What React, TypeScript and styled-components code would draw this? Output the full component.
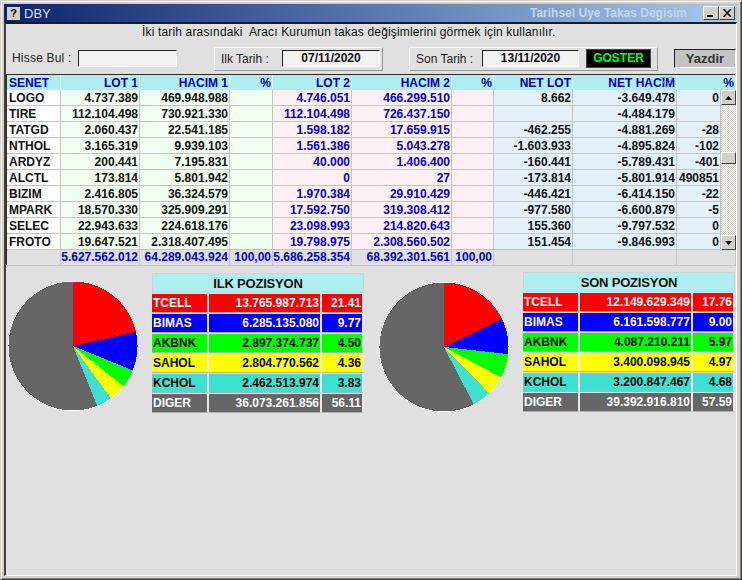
import React from "react";
import styled, { createGlobalStyle } from "styled-components";

const GlobalStyle = createGlobalStyle`
  html, body {
    margin: 0;
    padding: 0;
    background: #d4d0c8;
  }
  * {
    box-sizing: border-box;
  }
`;

const FONT = `"Liberation Sans", Arial, sans-serif`;

type Row = [string, string, string, string, string, string, string, string];

const rows: Row[] = [
  ["LOGO", "4.737.389", "469.948.988", "4.746.051", "466.299.510", "8.662", "-3.649.478", "0"],
  ["TIRE", "112.104.498", "730.921.330", "112.104.498", "726.437.150", "", "-4.484.179", ""],
  ["TATGD", "2.060.437", "22.541.185", "1.598.182", "17.659.915", "-462.255", "-4.881.269", "-28"],
  ["NTHOL", "3.165.319", "9.939.103", "1.561.386", "5.043.278", "-1.603.933", "-4.895.824", "-102"],
  ["ARDYZ", "200.441", "7.195.831", "40.000", "1.406.400", "-160.441", "-5.789.431", "-401"],
  ["ALCTL", "173.814", "5.801.942", "0", "27", "-173.814", "-5.801.914", "490851"],
  ["BIZIM", "2.416.805", "36.324.579", "1.970.384", "29.910.429", "-446.421", "-6.414.150", "-22"],
  ["MPARK", "18.570.330", "325.909.291", "17.592.750", "319.308.412", "-977.580", "-6.600.879", "-5"],
  ["SELEC", "22.943.633", "224.618.176", "23.098.993", "214.820.643", "155.360", "-9.797.532", "0"],
  ["FROTO", "19.647.521", "2.318.407.495", "19.798.975", "2.308.560.502", "151.454", "-9.846.993", "0"],
];

type Slice = { name: string; value: string; pct: number; bg: string; fg: string };

const makeSlices = (values: [string, number][]): Slice[] => {
  const names = ["TCELL", "BIMAS", "AKBNK", "SAHOL", "KCHOL", "DIGER"];
  const bgs = ["#ff0000", "#0000ff", "#00ff00", "#ffff00", "#40e0d0", "#666666"];
  const fgs = ["#ffffff", "#ffffff", "#000000", "#000000", "#000000", "#ffffff"];
  return values.map(([value, pct], i) => ({ name: names[i], value, pct, bg: bgs[i], fg: fgs[i] }));
};

const ilk = makeSlices([
  ["13.765.987.713", 21.41],
  ["6.285.135.080", 9.77],
  ["2.897.374.737", 4.5],
  ["2.804.770.562", 4.36],
  ["2.462.513.974", 3.83],
  ["36.073.261.856", 56.11],
]);

const son = makeSlices([
  ["12.149.629.349", 17.76],
  ["6.161.598.777", 9.0],
  ["4.087.210.211", 5.97],
  ["3.400.098.945", 4.97],
  ["3.200.847.467", 4.68],
  ["39.392.916.810", 57.59],
]);

const Pie = ({ slices }: { slices: Slice[] }) => {
  let angle = 0;
  const r = 64.5;
  const c = 65;
  const point = (a: number) => {
    const rad = (a / 100) * Math.PI * 2;
    return `${c + r * Math.sin(rad)} ${c - r * Math.cos(rad)}`;
  };
  return (
    <PieSvg width="130" height="130" viewBox="0 0 130 130">
      <circle cx={c} cy={c} r={r + 0.5} fill="#ffffff" />
      {slices.map((s) => {
        const start = angle;
        angle += s.pct;
        const large = s.pct > 50 ? 1 : 0;
        return (
          <path
            key={s.name}
            d={`M${c} ${c} L${point(start)} A${r} ${r} 0 ${large} 1 ${point(angle)} Z`}
            fill={s.bg}
            shapeRendering="crispEdges"
          />
        );
      })}
    </PieSvg>
  );
};

const Position = ({ title, slices, top, pieTop }: { title: string; slices: Slice[]; top: number; pieTop: number }) => (
  <PositionBlock $top={top}>
    <PieWrap $top={pieTop}>
      <Pie slices={slices} />
    </PieWrap>
    <PositionTable>
      <PositionTitle>{title}</PositionTitle>
      {slices.map((s) => (
        <PositionRow key={s.name}>
          <PositionCell $bg={s.bg} $fg={s.fg}>
            {s.name}
          </PositionCell>
          <PositionCell $bg={s.bg} $fg={s.fg} $right>
            {s.value}
          </PositionCell>
          <PositionCell $bg={s.bg} $fg={s.fg} $right>
            {s.pct.toFixed(2)}
          </PositionCell>
        </PositionRow>
      ))}
    </PositionTable>
  </PositionBlock>
);

export default function App() {
  return (
    <>
      <GlobalStyle />
      <Window>
        <TitleBar>
          <HelpIcon>?</HelpIcon>
          <AppName>DBY</AppName>
          <FormName>Tarihsel Uye Takas Degisim</FormName>
          <WinButton $first>
            <svg width="8" height="8" viewBox="0 0 8 8">
              <rect x="0" y="6" width="6" height="2" fill="#000" />
            </svg>
          </WinButton>
          <WinButton>
            <svg width="9" height="8" viewBox="0 0 9 8">
              <path d="M0.5 0 L8 8 M8 0 L0.5 8" stroke="#000" strokeWidth="1.5" fill="none" />
            </svg>
          </WinButton>
        </TitleBar>
        <Client>
          <Info>İki tarih arasındaki&nbsp; Aracı Kurumun takas değişimlerini görmek için kullanılır.</Info>
          <Toolbar>
            <FindLabel>Hisse Bul :</FindLabel>
            <FindInput />
            <DatePanel $width={169} $left={37}>
              <PanelLabel $width={61}>Ilk Tarih :</PanelLabel>
              <DateField $width={98}>07/11/2020</DateField>
            </DatePanel>
            <DatePanel $width={249} $left={26}>
              <PanelLabel $width={66}>Son Tarih :</PanelLabel>
              <DateField $width={97}>13/11/2020</DateField>
              <ShowButton>GOSTER</ShowButton>
            </DatePanel>
            <PrintButton>Yazdir</PrintButton>
          </Toolbar>

          <Grid>
            <HeaderRow>
              <HeadCell>SENET</HeadCell>
              <HeadCell $right>LOT 1</HeadCell>
              <HeadCell $right>HACIM 1</HeadCell>
              <HeadCell $right>%</HeadCell>
              <HeadCell $right>LOT 2</HeadCell>
              <HeadCell $right>HACIM 2</HeadCell>
              <HeadCell $right>%</HeadCell>
              <HeadCell $right>NET LOT</HeadCell>
              <HeadCell $right>
                NET HACIM
                <SortMark width="13" height="11" viewBox="0 0 13 11">
                  <path d="M0.5 0.5 H12.5 L6.5 10.5 Z" fill="none" stroke="#88b0c8" />
                </SortMark>
              </HeadCell>
              <HeadCell $right>%</HeadCell>
            </HeaderRow>
            <GridBody>
              <RowList>
                {rows.map((r) => (
                  <DataRow key={r[0]}>
                    <Code>{r[0]}</Code>
                    <Num $bg="#f0fff0">{r[1]}</Num>
                    <Num $bg="#f0fff0">{r[2]}</Num>
                    <Num $bg="#f0fff0" />
                    <Num $bg="#fff0f5" $fg="#0000cd">{r[3]}</Num>
                    <Num $bg="#fff0f5" $fg="#0000cd">{r[4]}</Num>
                    <Num $bg="#fff0f5" $fg="#0000cd" />
                    <Num $bg="#e2f1fa">{r[5]}</Num>
                    <Num $bg="#e2f1fa">{r[6]}</Num>
                    <Num $bg="#e2f1fa">{r[7]}</Num>
                  </DataRow>
                ))}
              </RowList>
              <ScrollBar>
                <ScrollButton>
                  <svg width="7" height="4" viewBox="0 0 7 4">
                    <path d="M3.5 0 L7 4 H0 Z" fill="#000" />
                  </svg>
                </ScrollButton>
                <ScrollTrack>
                  <ScrollThumb />
                </ScrollTrack>
                <ScrollButton>
                  <svg width="7" height="4" viewBox="0 0 7 4">
                    <path d="M0 0 H7 L3.5 4 Z" fill="#000" />
                  </svg>
                </ScrollButton>
              </ScrollBar>
            </GridBody>
            <TotalRow>
              <TotalCell />
              <TotalCell>5.627.562.012</TotalCell>
              <TotalCell>64.289.043.924</TotalCell>
              <TotalCell>100,00</TotalCell>
              <TotalCell>5.686.258.354</TotalCell>
              <TotalCell>68.392.301.561</TotalCell>
              <TotalCell>100,00</TotalCell>
              <TotalCell />
              <TotalCell />
              <TotalCell />
            </TotalRow>
          </Grid>

          <Positions>
            <Position title="ILK POZISYON" slices={ilk} top={1} pieTop={8} />
            <Position title="SON POZISYON" slices={son} top={0} pieTop={10} />
          </Positions>
        </Client>
      </Window>
    </>
  );
}

const Window = styled.div`
  width: 742px;
  height: 580px;
  display: flex;
  flex-direction: column;
  padding: 3px 4px 3px 3px;
  background: #d4d0c8;
  border-top: 1px solid #d4d0c8;
  border-left: 1px solid #d4d0c8;
  border-right: 1px solid #404040;
  border-bottom: 1px solid #404040;
  box-shadow: inset 1px 1px 0 #ffffff, inset -1px -1px 0 #808080;
  font-family: ${FONT};
  overflow: hidden;
`;

const TitleBar = styled.div`
  height: 18px;
  flex: none;
  display: flex;
  align-items: center;
  padding-left: 3px;
  padding-right: 1px;
  background: linear-gradient(to right, #0a246a, #a6caf0);
  color: #e8eef6;
`;

const HelpIcon = styled.span`
  width: 13px;
  height: 13px;
  display: flex;
  align-items: center;
  justify-content: center;
  background: #d4d0c8;
  color: #000;
  font-size: 11px;
  font-weight: bold;
`;

const AppName = styled.span`
  margin-left: 4px;
  font-size: 13px;
  color: #d8dfee;
`;

const FormName = styled.span`
  margin-left: auto;
  width: 173px;
  overflow: hidden;
  white-space: nowrap;
  font-size: 12px;
  font-weight: bold;
  color: #c6d6e8;
`;

const WinButton = styled.span<{ $first?: boolean }>`
  width: 16px;
  height: 14px;
  margin-right: ${(p) => (p.$first ? "0" : "1px")};
  display: flex;
  align-items: center;
  justify-content: center;
  background: #d4d0c8;
  border-top: 1px solid #ffffff;
  border-left: 1px solid #ffffff;
  border-right: 1px solid #404040;
  border-bottom: 1px solid #404040;
`;

const Client = styled.div`
  flex: 1;
  min-height: 0;
  background: #e0e0e0;
  border-top: 2px solid #1c1c1c;
  border-left: 2px solid #404040;
  border-right: 1px solid #ffffff;
  border-bottom: 1px solid #ffffff;
`;

const Info = styled.div`
  height: 18px;
  line-height: 17px;
  padding-left: 136px;
  font-size: 12px;
  letter-spacing: 0.16px;
  color: #111;
  white-space: nowrap;
`;

const Toolbar = styled.div`
  height: 33px;
  display: flex;
  align-items: center;
  padding-left: 6px;
`;

const FindLabel = styled.span`
  width: 66px;
  margin-top: -2px;
  font-size: 12px;
  letter-spacing: 0.2px;
  color: #222;
`;

const sunken = `
  background: #f2f2f2;
  border-top: 1px solid #222;
  border-left: 1px solid #222;
  border-right: 1px solid #fff;
  border-bottom: 1px solid #fff;
`;

const FindInput = styled.div`
  width: 99px;
  height: 17px;
  ${sunken}
`;

const DatePanel = styled.div<{ $width: number; $left: number }>`
  width: ${(p) => p.$width}px;
  height: 24px;
  margin-left: ${(p) => p.$left}px;
  display: flex;
  align-items: center;
  padding-left: 6px;
  border-top: 1px solid #f4f4f4;
  border-left: 1px solid #f4f4f4;
  border-right: 1px solid #9a9a9a;
  border-bottom: 1px solid #9a9a9a;
`;

const PanelLabel = styled.span<{ $width: number }>`
  width: ${(p) => p.$width}px;
  font-size: 12px;
  color: #222;
`;

const DateField = styled.div<{ $width: number }>`
  width: ${(p) => p.$width}px;
  height: 17px;
  ${sunken}
  font-size: 12px;
  font-weight: bold;
  line-height: 15px;
  text-align: center;
  color: #111;
`;

const ShowButton = styled.div`
  width: 65px;
  height: 19px;
  margin-left: 7px;
  background: #000;
  border: 1px solid #444;
  outline: 1px solid #000;
  outline-offset: -2px;
  color: #00ff00;
  font-size: 12px;
  font-weight: bold;
  line-height: 17px;
  text-align: center;
`;

const PrintButton = styled.div`
  width: 62px;
  height: 19px;
  margin-left: 16px;
  background: #c4c4c4;
  border-top: 1px solid #222;
  border-left: 1px solid #222;
  border-right: 1px solid #fff;
  border-bottom: 1px solid #fff;
  color: #333;
  font-size: 13px;
  font-weight: bold;
  line-height: 17px;
  text-align: center;
`;

const Grid = styled.div`
  width: 729px;
  height: 191px;
  margin-left: 1px;
  box-shadow: -1px -1px 0 #2a2a2a;
  font-size: 12px;
  font-weight: bold;
`;

const HeaderRow = styled.div`
  height: 15px;
  display: grid;
  grid-template-columns: 54px 79px 90px 43px 79px 100px 42px 79px 104px 59px;
`;

const HeadCell = styled.div<{ $right?: boolean }>`
  position: relative;
  height: 15px;
  line-height: 16px;
  padding: 0 1px 0 2px;
  text-align: ${(p) => (p.$right ? "right" : "left")};
  background: #afeeee;
  color: #0000a8;
  border-right: 1px solid #e6f2f2;
  white-space: nowrap;
`;

const SortMark = styled.svg`
  position: absolute;
  top: 2px;
  right: 3px;
`;

const GridBody = styled.div`
  height: 160px;
  display: flex;
`;

const RowList = styled.div`
  width: 714px;
`;

const DataRow = styled.div`
  height: 16px;
  display: grid;
  grid-template-columns: 54px 79px 90px 43px 79px 100px 42px 79px 104px 44px;
`;

const Code = styled.div`
  height: 16px;
  line-height: 16px;
  padding-left: 2px;
  background: #ffffff;
  color: #111;
  border-right: 1px solid #c4c4c4;
  border-bottom: 1px solid #c4c4c4;
`;

const Num = styled.div<{ $bg: string; $fg?: string }>`
  height: 16px;
  line-height: 16px;
  padding-right: 1px;
  text-align: right;
  white-space: nowrap;
  background: ${(p) => p.$bg};
  color: ${(p) => p.$fg || "#111"};
  border-right: 1px solid #c4c4c4;
  border-bottom: 1px solid #c4c4c4;
`;

const ScrollBar = styled.div`
  width: 15px;
  display: flex;
  flex-direction: column;
`;

const ScrollButton = styled.div`
  flex: none;
  height: 15px;
  display: flex;
  align-items: center;
  justify-content: center;
  background: #d4d0c8;
  border-top: 1px solid #ffffff;
  border-left: 1px solid #ffffff;
  border-right: 1px solid #404040;
  border-bottom: 1px solid #404040;
`;

const ScrollTrack = styled.div`
  flex: 1;
  padding-top: 47px;
  background: repeating-conic-gradient(#ffffff 0 25%, #d4d0c8 0 50%) 0 0 / 2px 2px;
`;

const ScrollThumb = styled.div`
  height: 12px;
  background: #d4d0c8;
  border-top: 1px solid #ffffff;
  border-left: 1px solid #ffffff;
  border-right: 1px solid #404040;
  border-bottom: 1px solid #404040;
`;

const TotalRow = styled.div`
  height: 16px;
  display: grid;
  grid-template-columns: 54px 79px 90px 43px 79px 100px 42px 79px 104px 59px;
  background: #e0e0e0;
`;

const TotalCell = styled.div`
  line-height: 15px;
  padding-right: 1px;
  text-align: right;
  white-space: nowrap;
  color: #0000cd;
  border-right: 1px solid #c4c4c4;
  border-bottom: 1px solid #c4c4c4;
`;

const Positions = styled.div`
  display: flex;
  padding-top: 6px;
  padding-left: 2px;
  gap: 15px;
`;

const PositionBlock = styled.div<{ $top: number }>`
  display: flex;
  margin-top: ${(p) => p.$top}px;
  gap: 14px;
`;

const PieWrap = styled.div<{ $top: number }>`
  margin-top: ${(p) => p.$top}px;
`;

const PieSvg = styled.svg`
  display: block;
`;

const PositionTable = styled.div`
  width: 212px;
  display: flex;
  flex-direction: column;
`;

const PositionTitle = styled.div`
  height: 20px;
  line-height: 19px;
  text-align: center;
  background: #afeeee;
  border: 1px solid #c8d8d8;
  color: #111;
  font-size: 13px;
  letter-spacing: -0.2px;
  font-weight: bold;
`;

const PositionRow = styled.div`
  height: 20px;
  display: grid;
  grid-template-columns: 57px 113px 42px;
`;

const PositionCell = styled.div<{ $bg: string; $fg: string; $right?: boolean }>`
  line-height: 18px;
  height: 20px;
  padding: 0 1px;
  font-size: 12px;
  font-weight: bold;
  white-space: nowrap;
  text-align: ${(p) => (p.$right ? "right" : "left")};
  background: ${(p) => p.$bg};
  color: ${(p) => p.$fg};
  border-top: 1px solid #e0e0e0;
  border-bottom: 1px solid #b0b0b0;
  border-right: 2px solid #e8e8e8;
`;
